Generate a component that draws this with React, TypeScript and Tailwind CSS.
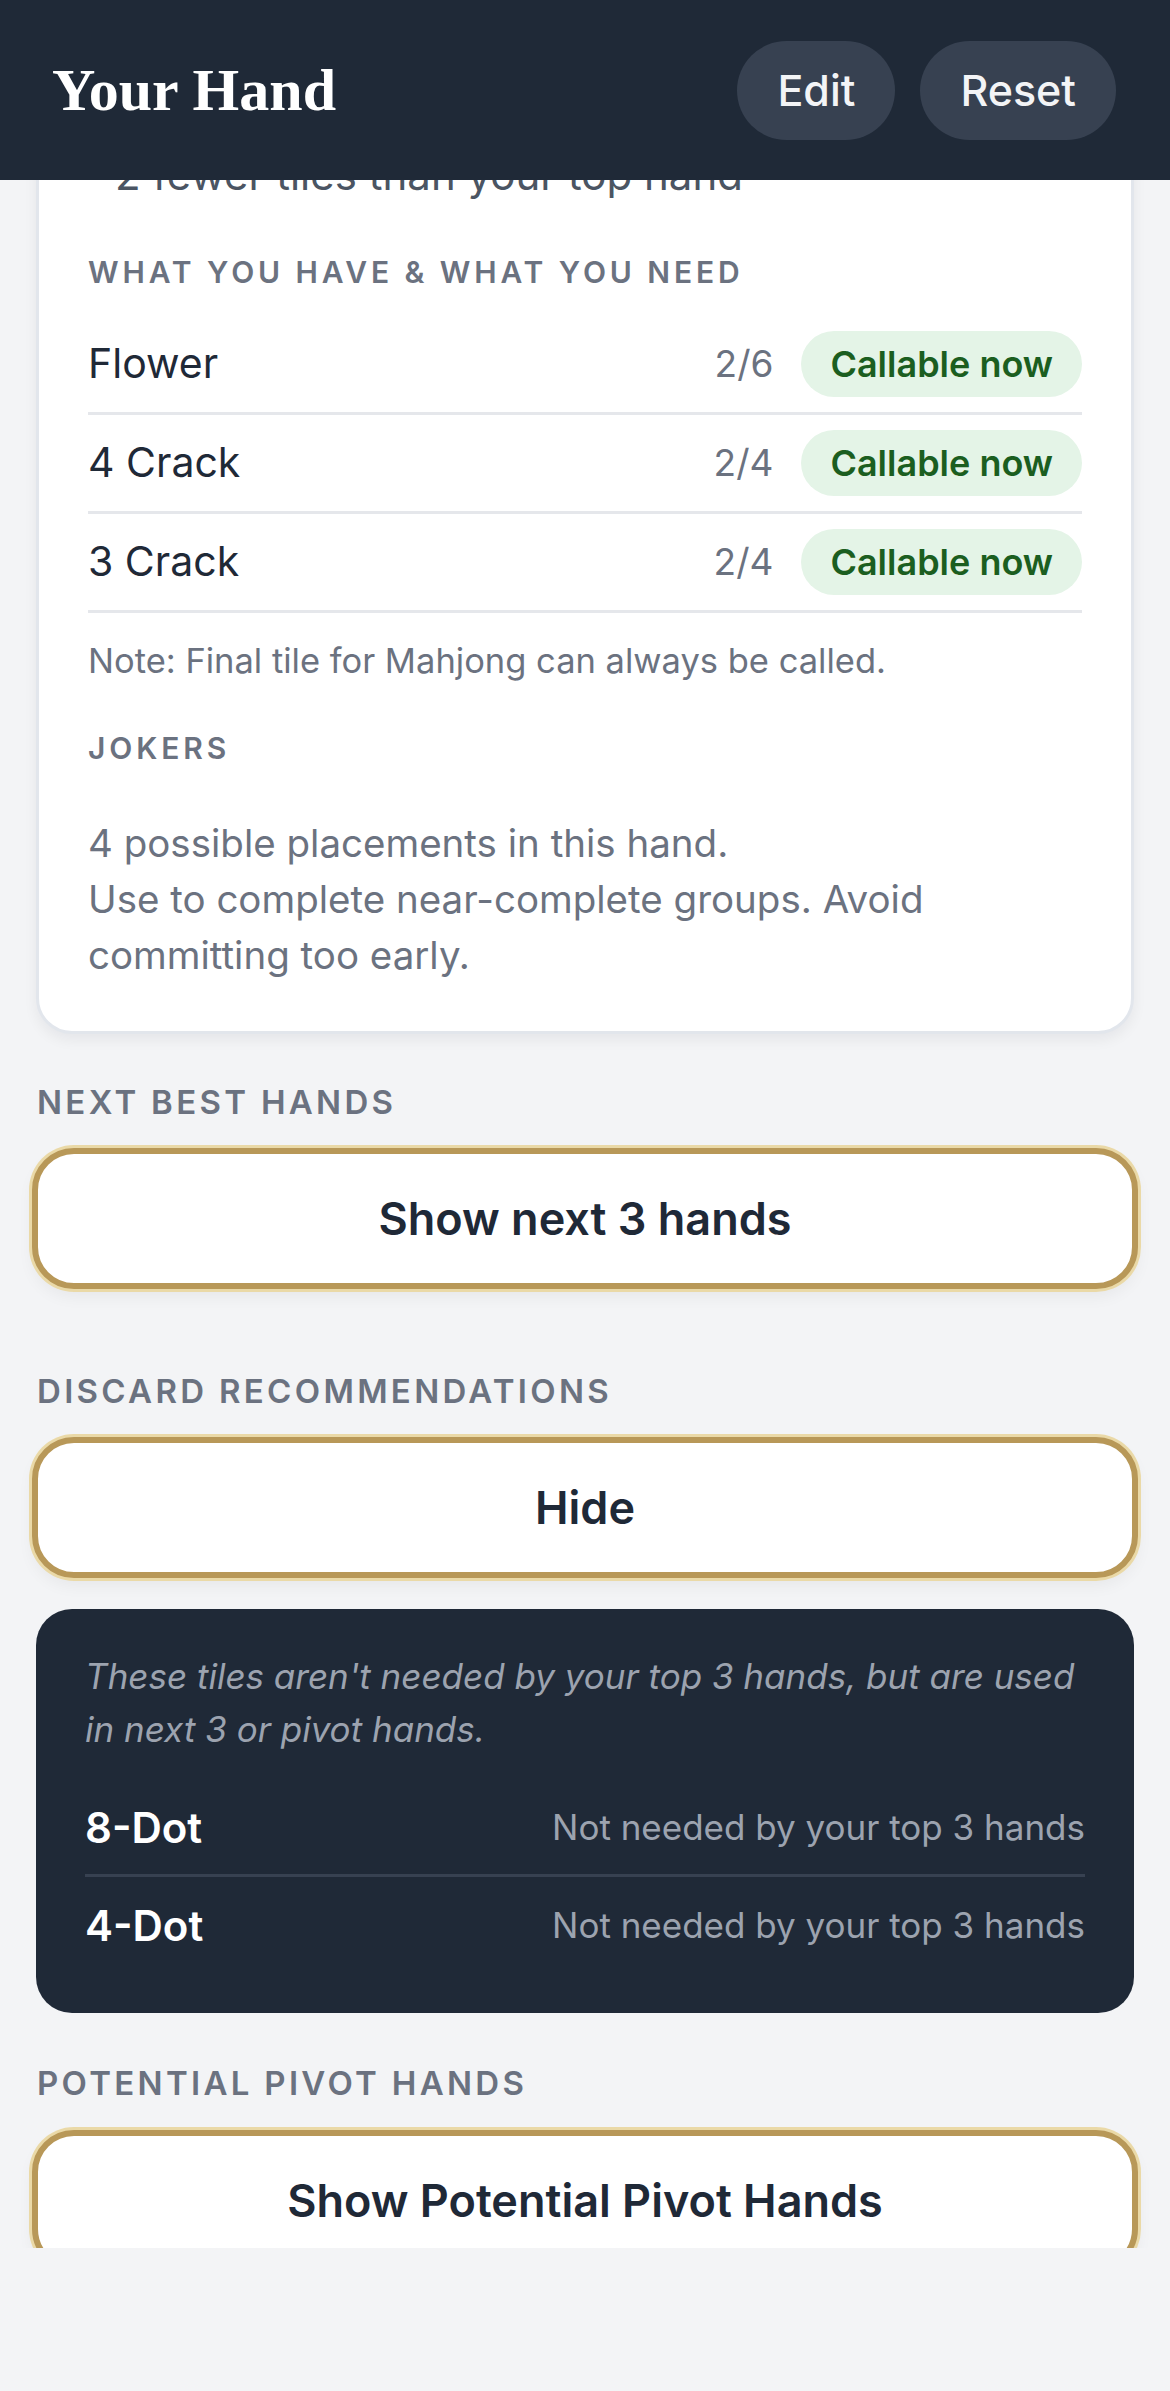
import React from "react";

const Label = ({ children, className = "" }: { children: React.ReactNode; className?: string }) => (
  <div
    className={`text-[33px] leading-[48px] font-semibold tracking-[0.1em] uppercase text-[#6b7280] ${className}`}
  >
    {children}
  </div>
);

const CardLabel = ({ children, className = "" }: { children: React.ReactNode; className?: string }) => (
  <div
    className={`text-[30px] leading-[48px] font-semibold tracking-[0.13em] uppercase text-[#6b7280] ${className}`}
  >
    {children}
  </div>
);

const GoldButton = ({ children, className = "" }: { children: React.ReactNode; className?: string }) => (
  <button
    className={`mx-[32px] w-[1106px] h-[141px] rounded-[42px] bg-white border-[6px] border-[#b89858] shadow-[0_0_0_3px_#ead9a7,0_8px_16px_rgba(0,0,0,0.05)] flex items-center justify-center text-[45px] font-semibold text-[#1f2937] ${className}`}
  >
    {children}
  </button>
);

const needs = [
  { name: "Flower", count: "2/6" },
  { name: "4 Crack", count: "2/4" },
  { name: "3 Crack", count: "2/4" },
];

const discards = ["8-Dot", "4-Dot"];

export default function App() {
  return (
    <div className="w-[1170px] h-[2391px] bg-[#f3f4f6] font-['Inter',sans-serif] overflow-hidden">
      <header className="relative z-10 h-[180px] bg-[#1f2937] flex items-center justify-between pl-[52px] pr-[54px]">
        <h1 className="font-['Liberation_Serif',serif] font-bold text-[60px] leading-none text-white">
          Your Hand
        </h1>
        <div className="flex gap-[25px]">
          <button className="h-[99px] px-[40px] rounded-full bg-[#374151] text-[#f3f4f6] text-[43px] font-medium">
            Edit
          </button>
          <button className="h-[99px] px-[40px] rounded-full bg-[#374151] text-[#f3f4f6] text-[43px] font-medium">
            Reset
          </button>
        </div>
      </header>

      <main className="h-[2068px] overflow-hidden">
        <section className="-mt-[80px] mx-[36px] bg-white border-[3px] border-[#e2e6ec] rounded-[36px] shadow-[0_6px_14px_rgba(15,23,42,0.06)] px-[49px] pt-[43px] pb-[48px]">
          <div className="pl-[27px] text-[42px] leading-[57px] text-[#4b5563]">
            2 fewer tiles than your top hand
          </div>

          <CardLabel className="mt-[45px]">What you have &amp; what you need</CardLabel>

          <div className="mt-[20px]">
            {needs.map((n) => (
              <div
                key={n.name}
                className="h-[99px] border-b-[3px] border-[#e5e7eb] flex items-center justify-between"
              >
                <span className="text-[41px] text-[#1f2937]">{n.name}</span>
                <div className="flex items-center gap-[28px]">
                  <span className="text-[37px] text-[#6b7280]">{n.count}</span>
                  <span className="h-[66px] px-[29px] rounded-full bg-[#e4f4e7] text-[#1b5e20] text-[36px] font-semibold flex items-center">
                    Callable now
                  </span>
                </div>
              </div>
            ))}
          </div>

          <div className="mt-[24px] text-[34.5px] leading-[48px] text-[#6b7280]">
            Note: Final tile for Mahjong can always be called.
          </div>

          <CardLabel className="mt-[39px]">Jokers</CardLabel>

          <div className="mt-[43px] text-[38.5px] leading-[56px] text-[#6b7280]">
            4 possible placements in this hand.
            <br />
            Use to complete near-complete groups. Avoid
            <br />
            committing too early.
          </div>
        </section>

        <Label className="mt-[44px] px-[37px]">Next best hands</Label>
        <GoldButton className="mt-[22px]">Show next 3 hands</GoldButton>

        <Label className="mt-[78px] px-[37px]">Discard recommendations</Label>
        <GoldButton className="mt-[22px]">Hide</GoldButton>

        <section className="mt-[31px] mx-[36px] h-[404px] bg-[#1f2937] rounded-[36px] px-[49px] pt-[41px]">
          <div className="text-[35px] leading-[53px] italic text-[#9ca3af] whitespace-nowrap">
            These tiles aren't needed by your top 3 hands, but are used
            <br />
            in next 3 or pivot hands.
          </div>
          <div className="mt-[25px]">
            {discards.map((d, i) => (
              <div
                key={d}
                className={`h-[96px] flex items-center justify-between ${
                  i === 0 ? "border-b-[3px] border-[#374151]" : ""
                }`}
              >
                <span className="text-[42px] font-semibold text-white">{d}</span>
                <span className="text-[35px] text-[#9ca3af]">Not needed by your top 3 hands</span>
              </div>
            ))}
          </div>
        </section>

        <Label className="mt-[46px] px-[37px]">Potential pivot hands</Label>
        <GoldButton className="mt-[23px]">Show Potential Pivot Hands</GoldButton>
      </main>
    </div>
  );
}
